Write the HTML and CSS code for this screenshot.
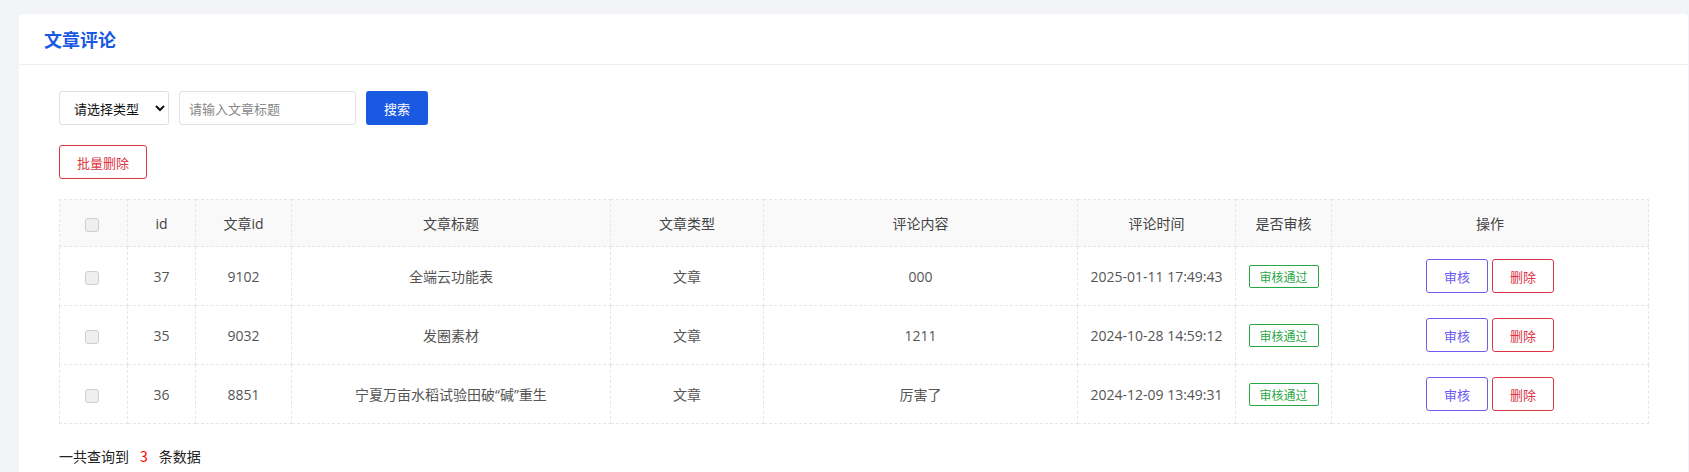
FILE: index.html
```html
<!DOCTYPE html>
<html lang="zh">
<head>
    <meta charset="UTF-8">
    <meta name="viewport" content="width=device-width, initial-scale=1.0">
    <title>文章评论</title>
    <link rel="stylesheet" href="styles.css">
</head>
<body>
    <div class="page">
        <div class="card">
            <div class="card-header">
                <h2>文章评论</h2>
            </div>
            <div class="card-body">
                <div class="search-bar">
                    <select class="type-select">
                        <option>请选择类型</option>
                        <option>文章</option>
                    </select>
                    <input class="title-input" type="text" placeholder="请输入文章标题">
                    <button class="btn-search">搜索</button>
                </div>
                <div class="toolbar">
                    <button class="btn-batch">批量删除</button>
                </div>
                <table class="comment-table">
                    <thead>
                        <tr>
                            <th><input type="checkbox" class="chk" disabled></th>
                            <th>id</th>
                            <th>文章id</th>
                            <th>文章标题</th>
                            <th>文章类型</th>
                            <th>评论内容</th>
                            <th>评论时间</th>
                            <th>是否审核</th>
                            <th>操作</th>
                        </tr>
                    </thead>
                    <tbody>
                        <tr>
                            <td><input type="checkbox" class="chk" disabled></td>
                            <td>37</td>
                            <td>9102</td>
                            <td>全端云功能表</td>
                            <td>文章</td>
                            <td>000</td>
                            <td>2025-01-11 17:49:43</td>
                            <td><span class="tag-pass">审核通过</span></td>
                            <td>
                                <div class="actions">
                                    <button class="btn-audit">审核</button>
                                    <button class="btn-del">删除</button>
                                </div>
                            </td>
                        </tr>
                        <tr>
                            <td><input type="checkbox" class="chk" disabled></td>
                            <td>35</td>
                            <td>9032</td>
                            <td>发圈素材</td>
                            <td>文章</td>
                            <td>1211</td>
                            <td>2024-10-28 14:59:12</td>
                            <td><span class="tag-pass">审核通过</span></td>
                            <td>
                                <div class="actions">
                                    <button class="btn-audit">审核</button>
                                    <button class="btn-del">删除</button>
                                </div>
                            </td>
                        </tr>
                        <tr>
                            <td><input type="checkbox" class="chk" disabled></td>
                            <td>36</td>
                            <td>8851</td>
                            <td>宁夏万亩水稻试验田破“碱”重生</td>
                            <td>文章</td>
                            <td>厉害了</td>
                            <td>2024-12-09 13:49:31</td>
                            <td><span class="tag-pass">审核通过</span></td>
                            <td>
                                <div class="actions">
                                    <button class="btn-audit">审核</button>
                                    <button class="btn-del">删除</button>
                                </div>
                            </td>
                        </tr>
                    </tbody>
                </table>
                <div class="summary">一共查询到<span class="count">3</span>条数据</div>
            </div>
        </div>
    </div>
</body>
</html>
```

FILE: styles.css
```css
* {
    box-sizing: border-box;
}

body {
    margin: 0;
    background-color: #f3f4f8;
    font-family: "Open Sans", "Noto Sans CJK SC", sans-serif;
    font-size: 14px;
    color: #333;
}

.page {
    padding: 14px 1px 0 19px;
}

.card {
    background: #fff;
    border-radius: 4px;
    min-height: 470px;
}

.card-header {
    height: 51px;
    padding: 0 25px;
    display: flex;
    align-items: center;
    border-bottom: 1px solid #eeeeee;
}

.card-header h2 {
    margin: 0;
    font-size: 18px;
    font-weight: bold;
    color: #1a5ae3;
    font-family: "Noto Sans CJK SC", sans-serif;
}

.card-body {
    padding: 26px 40px 0 40px;
}

.search-bar {
    display: flex;
    gap: 10px;
    height: 34px;
}

.type-select {
    width: 110px;
    height: 34px;
    border: 1px solid #dedede;
    border-radius: 3px;
    background: #fff;
    font-family: "Noto Sans CJK SC", sans-serif;
    font-size: 13px;
    color: #111;
    padding: 0 6px 0 10px;
}

.title-input {
    width: 177px;
    height: 34px;
    border: 1px solid #e3e3e3;
    border-radius: 3px;
    padding: 0 9px;
    font-family: "Noto Sans CJK SC", sans-serif;
    font-size: 13px;
}

.title-input::placeholder {
    color: #888;
}

.btn-search {
    width: 62px;
    height: 34px;
    border: none;
    border-radius: 3px;
    background-color: #1a5ae3;
    color: #fff;
    font-family: "Noto Sans CJK SC", sans-serif;
    font-size: 13px;
    cursor: pointer;
}

.toolbar {
    margin-top: 20px;
}

.btn-batch {
    width: 88px;
    height: 34px;
    border: 1px solid #dc3545;
    border-radius: 3px;
    background: #fff;
    color: #dc3545;
    font-family: "Noto Sans CJK SC", sans-serif;
    font-size: 13px;
    cursor: pointer;
}

.comment-table {
    margin-top: 20px;
    width: 1589px;
    border-collapse: collapse;
    table-layout: fixed;
}

.comment-table th,
.comment-table td {
    border: 1px dashed #e6e6e6;
    text-align: center;
    padding: 0;
    font-weight: normal;
}

.comment-table th {
    height: 47px;
    background-color: #f9f9f9;
    color: #444;
}

.comment-table td {
    height: 59px;
    color: #555;
}

.comment-table th:nth-child(1) { width: 68px; }
.comment-table th:nth-child(2) { width: 68px; }
.comment-table th:nth-child(3) { width: 96px; }
.comment-table th:nth-child(4) { width: 319px; }
.comment-table th:nth-child(5) { width: 153px; }
.comment-table th:nth-child(6) { width: 314px; }
.comment-table th:nth-child(7) { width: 158px; }
.comment-table th:nth-child(8) { width: 96px; }
.comment-table th:nth-child(9) { width: 317px; }

.chk {
    appearance: none;
    -webkit-appearance: none;
    width: 14px;
    height: 14px;
    margin: 0 0 0 -4px;
    border: 1px solid #cfcfcf;
    border-radius: 3px;
    background-color: #efefef;
    vertical-align: middle;
}

.tag-pass {
    display: inline-block;
    width: 70px;
    height: 23px;
    line-height: 21px;
    border: 1px solid #28a745;
    border-radius: 2px;
    color: #28a745;
    font-size: 12px;
    font-family: "Noto Sans CJK SC", sans-serif;
}

.actions {
    display: flex;
    justify-content: center;
    gap: 4px;
}

.actions button {
    width: 62px;
    height: 34px;
    border-radius: 3px;
    background: #fff;
    font-family: "Noto Sans CJK SC", sans-serif;
    font-size: 13px;
    cursor: pointer;
}

.btn-audit {
    border: 1px solid #6d5cf2;
    color: #6d5cf2;
}

.btn-del {
    border: 1px solid #dc3545;
    color: #dc3545;
}

.summary {
    margin-top: 22px;
    color: #222;
    font-family: "Noto Sans CJK SC", sans-serif;
    line-height: 20px;
}

.summary .count {
    color: #f00;
    margin: 0 11px;
}
```
